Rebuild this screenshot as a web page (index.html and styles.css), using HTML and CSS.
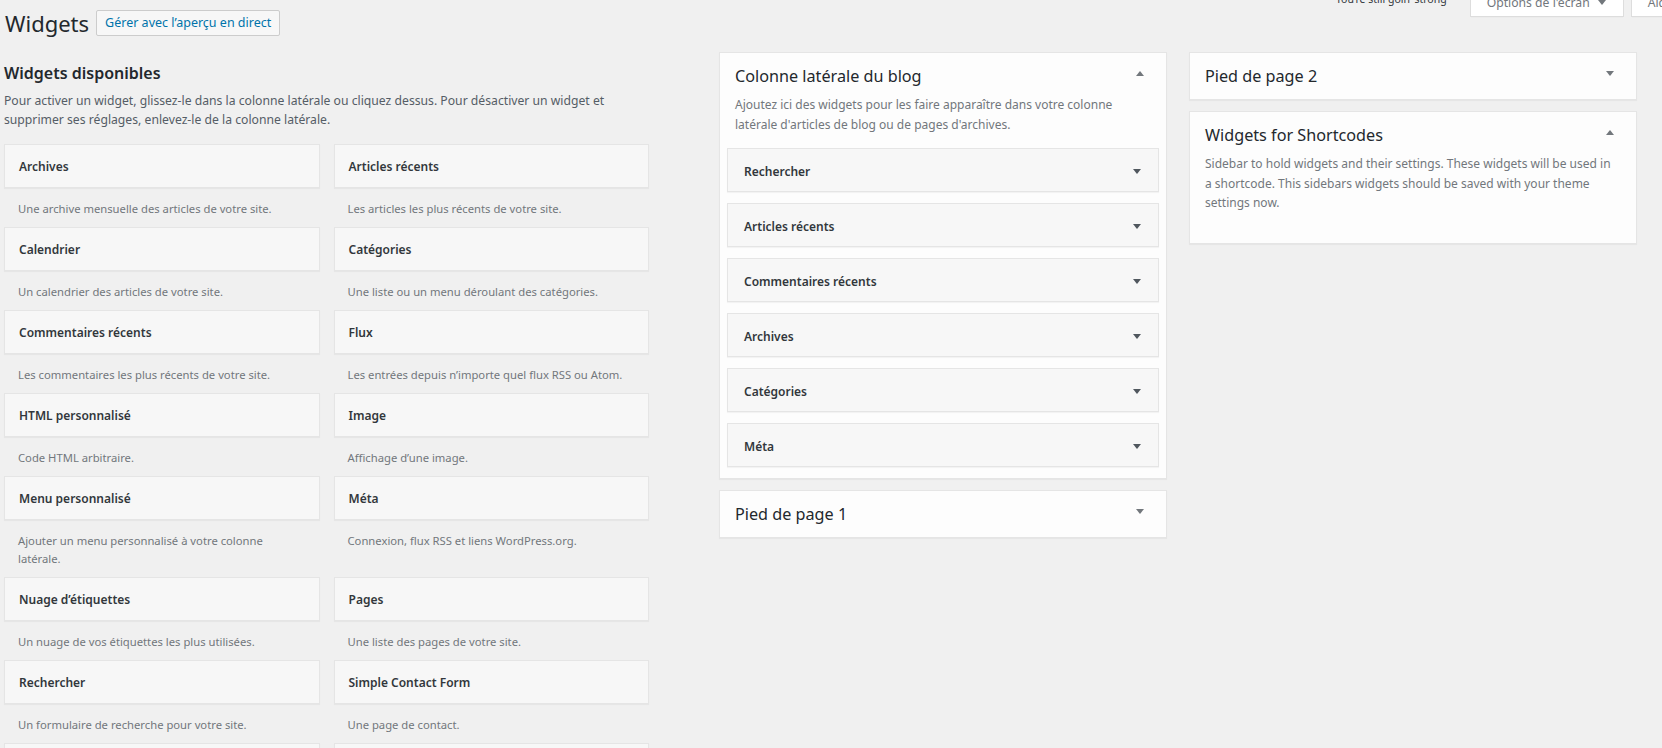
FILE: index.html
```html
<!DOCTYPE html>
<html lang="fr">
<head>
<meta charset="utf-8">
<title>Widgets</title>
<link rel="stylesheet" href="styles.css">
</head>
<body>
<div class="wrap">
  <header class="head">
    <h1 class="title">Widgets</h1>
    <a class="btn-live">Gérer avec l’aperçu en direct</a>
    <div class="meta">
      <p class="dolly">You’re still goin’ strong</p>
      <button class="meta-btn">Options de l'écran <span class="caret"></span></button>
      <button class="meta-btn">Aide <span class="caret"></span></button>
    </div>
  </header>

  <div class="columns">
    <section class="available">
      <h2 class="avail-title">Widgets disponibles</h2>
      <p class="intro">Pour activer un widget, glissez-le dans la colonne latérale ou cliquez dessus. Pour désactiver un widget et supprimer ses réglages, enlevez-le de la colonne latérale.</p>
      <div class="widget-grid">
        <div class="widget"><div class="widget-top">Archives</div><div class="widget-desc">Une archive mensuelle des articles de votre site.</div></div>
        <div class="widget"><div class="widget-top">Articles récents</div><div class="widget-desc">Les articles les plus récents de votre site.</div></div>
        <div class="widget"><div class="widget-top">Calendrier</div><div class="widget-desc">Un calendrier des articles de votre site.</div></div>
        <div class="widget"><div class="widget-top">Catégories</div><div class="widget-desc">Une liste ou un menu déroulant des catégories.</div></div>
        <div class="widget"><div class="widget-top">Commentaires récents</div><div class="widget-desc">Les commentaires les plus récents de votre site.</div></div>
        <div class="widget"><div class="widget-top">Flux</div><div class="widget-desc">Les entrées depuis n’importe quel flux RSS ou Atom.</div></div>
        <div class="widget"><div class="widget-top">HTML personnalisé</div><div class="widget-desc">Code HTML arbitraire.</div></div>
        <div class="widget"><div class="widget-top">Image</div><div class="widget-desc">Affichage d’une image.</div></div>
        <div class="widget"><div class="widget-top">Menu personnalisé</div><div class="widget-desc">Ajouter un menu personnalisé à votre colonne latérale.</div></div>
        <div class="widget"><div class="widget-top">Méta</div><div class="widget-desc">Connexion, flux RSS et liens WordPress.org.</div></div>
        <div class="widget"><div class="widget-top">Nuage d’étiquettes</div><div class="widget-desc">Un nuage de vos étiquettes les plus utilisées.</div></div>
        <div class="widget"><div class="widget-top">Pages</div><div class="widget-desc">Une liste des pages de votre site.</div></div>
        <div class="widget"><div class="widget-top">Rechercher</div><div class="widget-desc">Un formulaire de recherche pour votre site.</div></div>
        <div class="widget"><div class="widget-top">Simple Contact Form</div><div class="widget-desc">Une page de contact.</div></div>
        <div class="widget"><div class="widget-top">Texte</div><div class="widget-desc">Texte arbitraire.</div></div>
        <div class="widget"><div class="widget-top">Vidéo</div><div class="widget-desc">Affiche une vidéo.</div></div>
      </div>
    </section>

    <div class="sidebar-col">
      <div class="panel">
        <div class="panel-head open"><h2>Colonne latérale du blog</h2><span class="toggle up"></span></div>
        <p class="panel-desc">Ajoutez ici des widgets pour les faire apparaître dans votre colonne latérale d'articles de blog ou de pages d'archives.</p>
        <div class="panel-widgets">
          <div class="sw"><span>Rechercher</span><span class="caret dark"></span></div>
          <div class="sw"><span>Articles récents</span><span class="caret dark"></span></div>
          <div class="sw"><span>Commentaires récents</span><span class="caret dark"></span></div>
          <div class="sw"><span>Archives</span><span class="caret dark"></span></div>
          <div class="sw"><span>Catégories</span><span class="caret dark"></span></div>
          <div class="sw"><span>Méta</span><span class="caret dark"></span></div>
        </div>
      </div>
      <div class="panel">
        <div class="panel-head"><h2>Pied de page 1</h2><span class="toggle down"></span></div>
      </div>
    </div>

    <div class="sidebar-col">
      <div class="panel">
        <div class="panel-head"><h2>Pied de page 2</h2><span class="toggle down"></span></div>
      </div>
      <div class="panel">
        <div class="panel-head open"><h2>Widgets for Shortcodes</h2><span class="toggle up"></span></div>
        <p class="panel-desc">Sidebar to hold widgets and their settings. These widgets will be used in a shortcode. This sidebars widgets should be saved with your theme settings now.</p>
        <div class="dropzone"></div>
      </div>
    </div>
  </div>
</div>
</body>
</html>
```

FILE: styles.css
```css
html, body {
  margin: 0;
  padding: 0;
  overflow: hidden;
  background: #f0f0f0;
}

body {
  font-family: "Noto Sans", "Open Sans", sans-serif;
  color: #23282d;
  font-size: 12px;
}

.wrap {
  padding-left: 4px;
}

/* ---------- header ---------- */
.head {
  display: flex;
  align-items: center;
  padding-top: 10px;
}

.title {
  margin: 0;
  font-size: 22px;
  font-weight: 400;
  line-height: 26px;
  color: #23282d;
  padding-left: 1px;
}

.btn-live {
  margin-left: 7px;
  height: 26px;
  box-sizing: border-box;
  padding: 0 8px;
  border: 1px solid #ccc;
  border-radius: 2px;
  background: #f7f7f7;
  color: #0073aa;
  font-size: 12.5px;
  line-height: 24px;
  white-space: nowrap;
}

.meta {
  margin-left: auto;
  margin-right: -52px;
  align-self: flex-start;
  margin-top: -22px;
  display: flex;
  align-items: flex-start;
}

.dolly {
  margin: 0 23px 0 0;
  font-size: 10.5px;
  line-height: 14px;
  padding-top: 4px;
  color: #32373c;
  white-space: nowrap;
}

.meta-btn {
  display: flex;
  align-items: center;
  height: 29px;
  box-sizing: border-box;
  padding: 1px 17px 0 16px;
  margin-right: 7px;
  border: 1px solid #ddd;
  border-top: none;
  background: #fff;
  box-shadow: 0 1px 1px -1px rgba(0, 0, 0, 0.1);
  font-family: inherit;
  font-size: 12.2px;
  color: #72777c;
  white-space: nowrap;
}

.meta-btn .caret {
  margin-left: 8px;
}

.caret {
  display: inline-block;
  width: 0;
  height: 0;
  border-left: 4px solid transparent;
  border-right: 4px solid transparent;
  border-top: 5px solid #72777c;
}

.caret.dark {
  border-top-color: #50575e;
}

/* ---------- columns ---------- */
.columns {
  display: flex;
  align-items: flex-start;
  margin-top: 16px;
}

.available {
  width: 645px;
  margin-right: 70px;
  flex: none;
}

.avail-title {
  margin: 9px 0 0;
  font-size: 16px;
  font-weight: 600;
  line-height: 24px;
  color: #23282d;
}

.intro {
  margin: 7px 0 0;
  font-size: 12.2px;
  line-height: 18.5px;
  color: #555d66;
}

.widget-grid {
  margin-top: 15px;
  display: grid;
  grid-template-columns: 1fr 1fr;
  column-gap: 14px;
}

.widget-top {
  height: 44px;
  box-sizing: border-box;
  border: 1px solid #e5e5e5;
  background: #f7f7f7;
  box-shadow: 0 1px 1px rgba(0, 0, 0, 0.04);
  padding: 0 14px;
  line-height: 44px;
  font-size: 12px;
  font-weight: 600;
  color: #32373c;
}

.widget-desc {
  padding: 12px 15px 9px 14px;
  font-size: 11.25px;
  line-height: 18px;
  color: #72777c;
}

/* ---------- sidebars ---------- */
.sidebar-col {
  width: 448px;
  flex: none;
  display: flex;
  flex-direction: column;
  gap: 11px;
}

.sidebar-col + .sidebar-col {
  margin-left: 22px;
}

.panel {
  background: #fdfdfd;
  border: 1px solid #e5e5e5;
  box-shadow: 0 1px 1px rgba(0, 0, 0, 0.04);
}

.panel-head {
  display: flex;
  justify-content: space-between;
  align-items: flex-start;
  padding: 11px 15px 11px;
}

.panel-head.open {
  padding-bottom: 0;
}

.panel-head h2 {
  margin: 0;
  font-size: 16.2px;
  font-weight: 400;
  line-height: 24px;
  color: #23282d;
}

.toggle {
  margin-top: 7px;
  margin-right: 7px;
  width: 0;
  height: 0;
  border-left: 4px solid transparent;
  border-right: 4px solid transparent;
}

.toggle.down {
  border-top: 5px solid #72777c;
}

.toggle.up {
  border-bottom: 5px solid #72777c;
}

.panel-desc {
  margin: 0;
  padding: 7px 22px 14px 15px;
  font-size: 12px;
  line-height: 19.5px;
  color: #72777c;
}

.panel-widgets {
  padding: 0 7px 0;
}

.sw {
  display: flex;
  align-items: center;
  justify-content: space-between;
  height: 44px;
  box-sizing: border-box;
  margin-bottom: 11px;
  padding: 2px 17px 0 16px;
  border: 1px solid #e5e5e5;
  background: #f7f7f7;
  box-shadow: 0 1px 1px rgba(0, 0, 0, 0.04);
  font-size: 12px;
  font-weight: 600;
  color: #32373c;
}

.dropzone {
  height: 16px;
}
```
